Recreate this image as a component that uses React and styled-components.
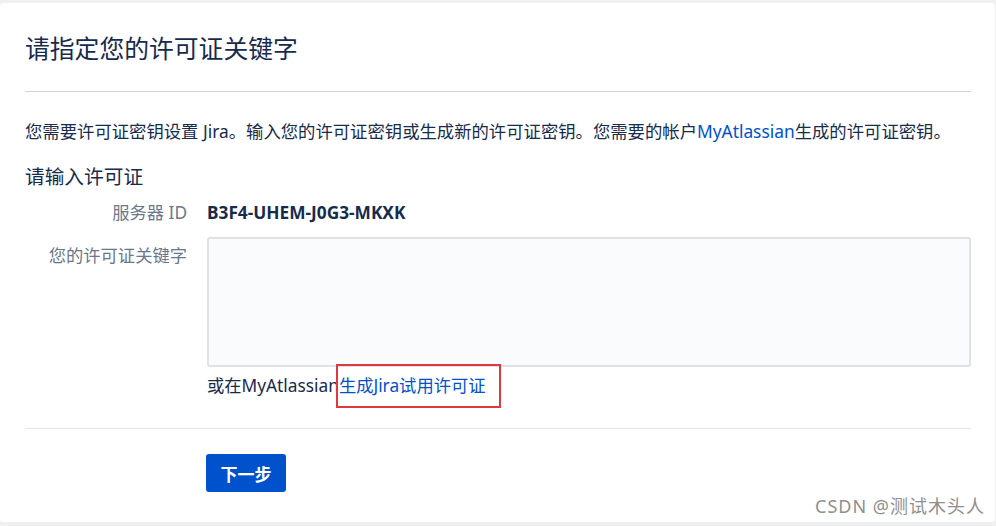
import React from 'react';
import styled, { createGlobalStyle } from 'styled-components';

const GlobalStyle = createGlobalStyle`
  html, body {
    margin: 0;
    padding: 0;
    background: #eef0f2;
  }
  body {
    font-family: "Noto Sans", "Noto Sans CJK SC", sans-serif;
    color: #172b4d;
  }
`;

const Page = styled.div`
  position: relative;
  width: 996px;
  height: 526px;
  padding: 3px 1px 4px 0;
  box-sizing: border-box;
`;

const Panel = styled.div`
  background: #fff;
  height: 100%;
  box-sizing: border-box;
  padding: 0 24px 0 25px;
  border-radius: 3px;
`;

const Header = styled.div`
  padding: 30px 0 28px;
  border-bottom: 1px solid #cfd2d6;
`;

const Title = styled.h1`
  margin: 0;
  font-size: 24.8px;
  line-height: 30px;
  font-weight: 400;
  color: #172b4d;
`;

const Intro = styled.p`
  margin: 27px 0 0;
  font-size: 17.35px;
  line-height: 24px;
  white-space: nowrap;
`;

const Link = styled.a`
  color: #0052cc;
  text-decoration: none;
`;

const Section = styled.h2`
  margin: 21px 0 0;
  font-size: 19.7px;
  line-height: 26px;
  font-weight: 400;
`;

const Field = styled.div`
  display: grid;
  grid-template-columns: 162px 1fr;
  column-gap: 20px;
  margin-top: ${p => p.$gap}px;
`;

const Label = styled.label`
  text-align: right;
  color: #6b778c;
  font-size: 17.3px;
  line-height: 24px;
  padding-top: ${p => p.$offset || 0}px;
`;

const Value = styled.div`
  font-size: 17.3px;
  line-height: 24px;
  font-weight: 700;
  color: #172b4d;
`;

const KeyArea = styled.textarea`
  display: block;
  box-sizing: border-box;
  width: 100%;
  height: 130px;
  resize: none;
  border: 2px solid #dfe1e6;
  border-radius: 3px;
  background: #fafbfc;
  font: inherit;
`;

const Help = styled.div`
  margin-top: 7px;
  font-size: 17.3px;
  line-height: 24px;
  color: #172b4d;
`;

const Marked = styled.span`
  position: relative;
  &::after {
    content: '';
    position: absolute;
    left: -3px;
    right: -15px;
    top: -10px;
    bottom: -11px;
    border: 2px solid #e0383e;
  }
`;

const Footer = styled.div`
  margin-top: 30px;
  border-top: 1px solid #e4e6ea;
  padding: 25px 0 0 181px;
`;

const Button = styled.button`
  width: 80px;
  height: 38px;
  border: 0;
  border-radius: 3px;
  background: #0052cc;
  color: #fff;
  font-family: inherit;
  font-size: 17px;
  font-weight: 700;
  cursor: pointer;
`;

const Watermark = styled.div`
  position: absolute;
  right: 11px;
  bottom: 8px;
  font-size: 18px;
  line-height: 24px;
  color: #8f8f8f;
  letter-spacing: 1px;
`;

export default function App() {
  return (
    <Page>
      <GlobalStyle />
      <Panel>
        <Header>
          <Title>请指定您的许可证关键字</Title>
        </Header>
        <Intro>
          您需要许可证密钥设置 Jira。输入您的许可证密钥或生成新的许可证密钥。您需要的帐户<Link href="#">MyAtlassian</Link>生成的许可证密钥。
        </Intro>
        <Section>请输入许可证</Section>
        <Field $gap={11}>
          <Label>服务器 ID</Label>
          <Value>B3F4-UHEM-J0G3-MKXK</Value>
        </Field>
        <Field $gap={12}>
          <Label htmlFor="licenseKey" $offset={7}>您的许可证关键字</Label>
          <div>
            <KeyArea id="licenseKey" />
            <Help>
              或在MyAtlassian<Marked><Link href="#">生成Jira试用许可证</Link></Marked>
            </Help>
          </div>
        </Field>
        <Footer>
          <Button type="button">下一步</Button>
        </Footer>
      </Panel>
      <Watermark>CSDN @测试木头人</Watermark>
    </Page>
  );
}
